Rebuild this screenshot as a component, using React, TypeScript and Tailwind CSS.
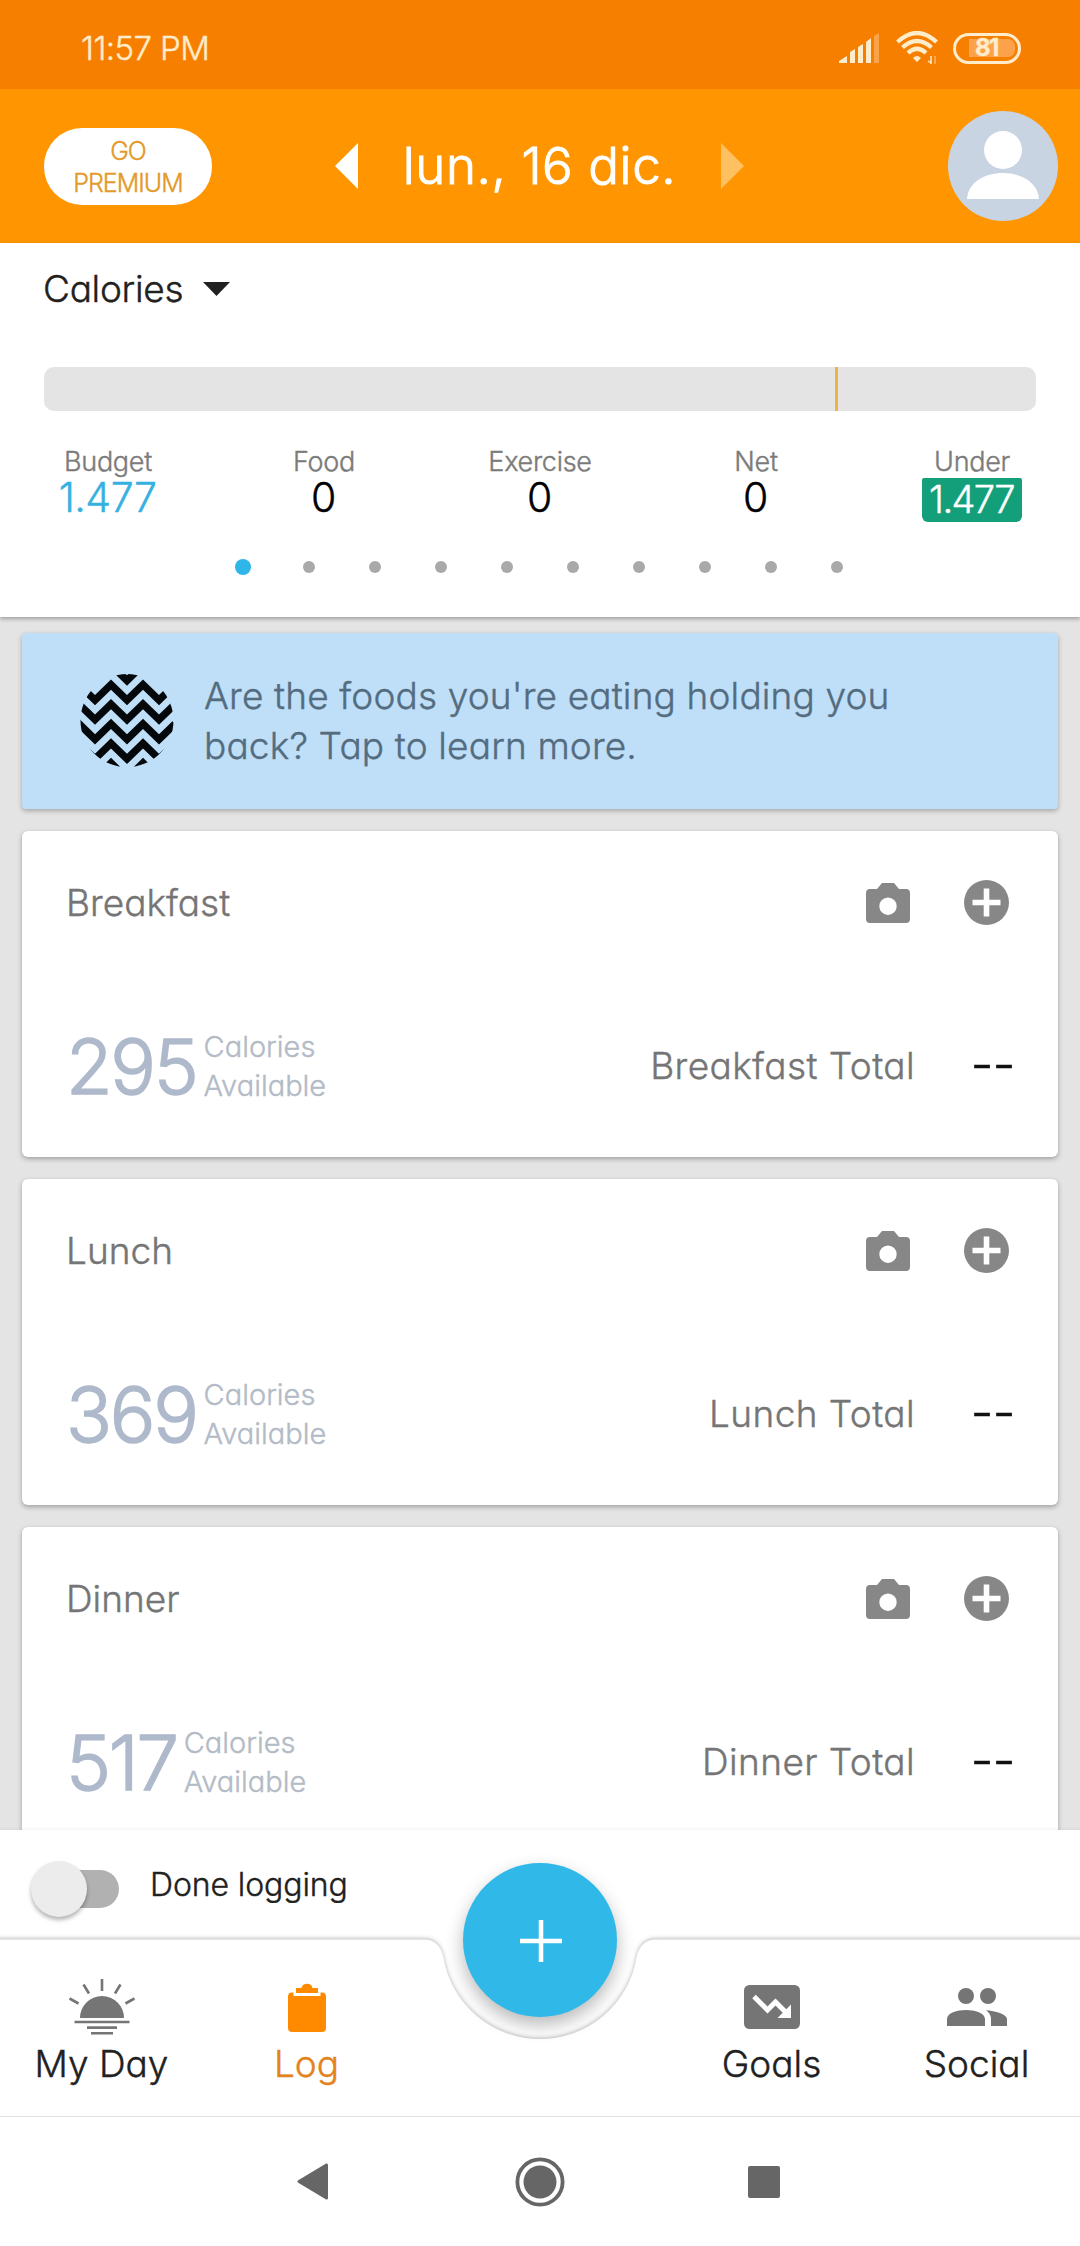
import { useState } from 'react';

const stats = [
  { label: 'Budget', value: '1.477', tone: 'text-[#35b1e1]' },
  { label: 'Food', value: '0', tone: 'text-black' },
  { label: 'Exercise', value: '0', tone: 'text-black' },
  { label: 'Net', value: '0', tone: 'text-black' },
];

const meals = [
  { name: 'Breakfast', calories: 295 },
  { name: 'Lunch', calories: 369 },
  { name: 'Dinner', calories: 517 },
];

const zigzags = [-8, 11.6, 31.2, 50.8, 70.4, 90];

function StatusBar() {
  return (
    <div className="flex h-[89px] items-center bg-[#f77f00] pl-[81px] pt-[7px] text-[#ffeccb]">
      <span className="w-[758px] text-[33px] leading-[40px] tracking-[-0.6px]">11:57 PM</span>
      <svg width="41" height="30" viewBox="0 0 41 30" fill="currentColor">
        <path d="M0 30v-2l8-5v7zM11 30V19l5-3v14zM19 30V14l5-3v19zM27 30V9l5-4v25z" />
        <path d="M35 30V3l5-3v30z" opacity="0.35" />
      </svg>
      <svg className="ml-[16px]" width="43" height="34" viewBox="0 0 43 34" fill="none" stroke="currentColor" strokeWidth="4.200">
        <path d="M1.500 11Q21 -7 40.500 11M6.500 16.500Q21 3.500 35.500 16.500M12 22Q21 13.500 30 22" />
        <path d="M17 27q4-4 8 0l-4 4z" fill="currentColor" stroke="none" />
        <path d="M35 25v8M32 30l3 2" strokeWidth="1.500" />
        <path d="M39 25v8" strokeWidth="1.500" opacity="0.5" />
      </svg>
      <div className="ml-[14px] flex h-[31px] w-[68px] items-center justify-end rounded-full border-[3px] border-[#ffeccb] pr-[3px]">
        <div className="flex h-[18px] w-[46px] items-center rounded-r-[7px] bg-[#fba24a] pl-[6px] text-[24px] leading-none font-bold tracking-[-1.5px]">
          81
        </div>
      </div>
    </div>
  );
}

function Header() {
  return (
    <header className="flex h-[154px] items-center bg-[#ff9500] pl-[44px]">
      <button className="h-[77px] w-[168px] rounded-[38px] bg-white pt-[1px] text-[25px] leading-[32px] tracking-[-1px] text-[#e39a2a]">
        GO
        <br />
        PREMIUM
      </button>
      <svg className="ml-[123px]" width="23" height="46" viewBox="0 0 23 46" fill="white">
        <path d="M23 0v46L0 23z" />
      </svg>
      <h1 className="w-[363px] text-center text-[51px] leading-[60px] tracking-[0.6px] whitespace-nowrap text-white [-webkit-text-stroke:1px]">
        lun., 16 dic.
      </h1>
      <svg width="23" height="46" viewBox="0 0 23 46" fill="#ffc062">
        <path d="M0 0v46l23-23z" />
      </svg>
      <svg className="ml-[204px]" width="110" height="110" viewBox="0 0 110 110">
        <circle cx="55" cy="55" r="55" fill="#c8d4e2" />
        <circle cx="55" cy="39" r="19" fill="white" />
        <path d="M19 88C20 71 37 62 55 62s35 9 36 26z" fill="white" />
      </svg>
    </header>
  );
}

function Summary() {
  return (
    <section className="relative z-10 h-[374px] bg-white shadow-[0_2px_4px_rgba(0,0,0,0.3)]">
      <div className="flex h-[91px] items-center pl-[43px] text-[#212121]">
        <span className="w-[160px] text-[37px] leading-[44px] tracking-[-0.3px]">Calories</span>
        <svg width="27" height="14" viewBox="0 0 27 14" fill="currentColor">
          <path d="M0 0h27L13.500 14z" />
        </svg>
      </div>
      <div className="mx-[44px] mt-[33px] h-[44px] rounded-[10px] bg-[#e4e4e4] pl-[791px]">
        <div className="h-full w-[3px] bg-[#ecb444]" />
      </div>
      <div className="mt-[33px] grid h-[79px] grid-cols-5 text-center">
        {stats.map((s) => (
          <div key={s.label}>
            <div className="text-[27px] leading-[36px] tracking-[-0.3px] text-[#7b7b7b]">{s.label}</div>
            <div className={`mt-[-1px] pr-[1px] text-[41px] leading-[36px] tracking-[-0.5px] ${s.tone}`}>{s.value}</div>
          </div>
        ))}
        <div>
          <div className="text-[27px] leading-[36px] tracking-[-0.3px] text-[#7b7b7b]">Under</div>
          <div className="mx-auto mt-[-2px] h-[44px] w-[100px] rounded-t-[2px] rounded-b-[6px] bg-[#139f79] pr-[1px] text-[38px] leading-[42px] tracking-[-1.6px] text-white">
            1.477
          </div>
        </div>
      </div>
      <div className="flex h-[88px] items-center justify-center gap-[54px]">
        <span className="-mx-[2px] size-[16px] rounded-full bg-[#2fb6e8]" />
        {[1, 2, 3, 4, 5, 6, 7, 8, 9].map((n) => (
          <span key={n} className="size-[12px] rounded-full bg-[#a9a9a9]" />
        ))}
      </div>
    </section>
  );
}

function TipBanner() {
  return (
    <div className="flex h-[176px] shrink-0 rounded-[4px] bg-[#bfdff8] pl-[58px] shadow-[0_2px_5px_rgba(0,0,0,0.28)]">
      <svg className="mt-[40px]" width="94" height="94" viewBox="0 0 94 94">
        <clipPath id="tip-badge">
          <circle cx="47" cy="47.500" r="46.500" />
        </clipPath>
        <g clipPath="url(#tip-badge)" fill="none" stroke="#05080b" strokeWidth="7.400">
          {zigzags.map((y) => (
            <path key={y} d={`M-17 ${y + 15.5}l16-15.500l16 15.500l16-15.500l16 15.500l16-15.500l16 15.500l16-15.500`} />
          ))}
        </g>
      </svg>
      <p className="mt-[38px] ml-[30px] text-[37px] leading-[50px] tracking-[0.15px] text-[#546c80]">
        Are the foods you're eating holding you
        <br />
        back? Tap to learn more.
      </p>
    </div>
  );
}

function MealCard({ name, calories }: { name: string; calories: number }) {
  return (
    <article className="h-[326px] shrink-0 rounded-[6px] bg-white shadow-[0_2px_5px_rgba(0,0,0,0.3)]">
      <div className="flex h-[143px] items-center pr-[49px] pl-[44px]">
        <h2 className="flex-1 text-[37px] leading-[44px] text-[#757575]">{name}</h2>
        <svg width="44" height="40" viewBox="0 0 44 40" fill="#878787">
          <path
            fillRule="evenodd"
            d="M16 0h12l5 6h7a4 4 0 0 1 4 4v26a4 4 0 0 1-4 4H4a4 4 0 0 1-4-4V10a4 4 0 0 1 4-4h7zM22 14.500a8.700 8.700 0 1 0 0 17.400a8.700 8.700 0 1 0 0-17.400z"
          />
        </svg>
        <svg className="ml-[54px]" width="45" height="45" viewBox="0 0 45 45">
          <circle cx="22.500" cy="22.500" r="22.500" fill="#878787" />
          <path d="M8.500 22.500h28M22.500 8.500v28" stroke="white" strokeWidth="5.600" />
        </svg>
      </div>
      <div className="flex h-[183px] items-center pr-[46px] pl-[44px]">
        <span className="text-[76px] leading-[80px] tracking-[-2.3px] text-[#aeb9cb] [-webkit-text-stroke:1.5px]">{calories}</span>
        <span className="ml-[7px] flex-1 text-[29px] leading-[39px] text-[#b3bbc6]">
          Calories
          <br />
          Available
        </span>
        <span className="text-[37px] leading-[44px] tracking-[0.4px] text-[#757575]">{name} Total</span>
        <span className="mt-[-2px] ml-[56px] w-[41px] origin-left scale-x-[1.3] text-[37px] leading-[44px] font-normal text-[#111]">--</span>
      </div>
    </article>
  );
}

function DoneLogging() {
  const [done, setDone] = useState(false);
  return (
    <div className="relative z-10 flex h-[109px] items-center bg-white pl-[31px] shadow-[0_-1px_3px_rgba(0,0,0,0.05)]">
      <button onClick={() => setDone(!done)} className="mt-[9px] flex h-[56px] w-[88px] items-center" aria-label="Done logging">
        <span className={`z-10 size-[56px] shrink-0 rounded-full bg-[#ececec] shadow-[0_3px_4px_rgba(0,0,0,0.3)] ${done ? 'order-2' : ''}`} />
        <span className={`h-[38px] w-[60px] rounded-full bg-[#b1b1b1] ${done ? '-mr-[28px]' : '-ml-[28px]'}`} />
      </button>
      <span className="ml-[31px] text-[32px] leading-[40px] tracking-[-0.1px] text-[#212121]">Done logging</span>
    </div>
  );
}

function MyDayIcon() {
  return (
    <svg width="66" height="56" viewBox="0 0 66 56" fill="none" stroke="#757575" strokeWidth="2.600">
      <path d="M11 39a22 22 0 0 1 44 0z" fill="#757575" stroke="none" />
      <path d="M5.500 43h55M18 48.600h30M22 54.200h22M33 0v12M14.500 5.500l5.500 9M51.500 5.500l-5.500 9M.500 19.500l9 5M65.500 19.500l-9 5" />
    </svg>
  );
}

function LogIcon() {
  return (
    <svg width="38" height="50" viewBox="0 0 38 50" fill="#ff8a00">
      <path d="M8 11V6h5.500a5.700 5.700 0 0 1 11 0H30v5z" />
      <path d="M4 10.500h1.500V14h27v-3.500H34a4 4 0 0 1 4 4V46a4 4 0 0 1-4 4H4a4 4 0 0 1-4-4V14.500a4 4 0 0 1 4-4z" />
    </svg>
  );
}

function GoalsIcon() {
  return (
    <svg width="56" height="44" viewBox="0 0 56 44">
      <rect width="56" height="44" rx="5.500" fill="#757575" />
      <path d="M10 11.500l13.500 13.500l8-8L42 27.500" fill="none" stroke="white" strokeWidth="5" />
      <path d="M47 19.500V33H33.500z" fill="white" />
    </svg>
  );
}

function SocialIcon() {
  return (
    <svg width="60" height="38" viewBox="0 0 60 38" fill="#757575">
      <circle cx="19" cy="8" r="8" />
      <circle cx="41" cy="8" r="8" />
      <path d="M0 38v-7c0-6 10-9 19-9s19 3 19 9v7zM39 22.300c9 .7 21 3.700 21 9V38H44v-7c0-4-2-6.500-5-8.700z" />
    </svg>
  );
}

const tabs = [
  { label: 'My Day', icon: <MyDayIcon /> },
  { label: 'Log', icon: <LogIcon /> },
  { label: 'Goals', icon: <GoalsIcon /> },
  { label: 'Social', icon: <SocialIcon /> },
];

function TabBar() {
  const [active, setActive] = useState('Log');
  return (
    <nav className="relative z-20 h-[178px] border-b border-[#e0e0e0]">
      {/* white sheet with a notch cut out for the add button */}
      <svg className="absolute -top-[20px] left-0" width="1080" height="197" viewBox="0 0 1080 197">
        <path
          className="drop-shadow-[0_-1px_2px_rgba(0,0,0,0.28)]"
          fill="white"
          d="M-10 20.500H424C435 20.500 441 27 443.300 38A98 98 0 0 0 636.700 38C639 27 645 20.500 656 20.500H1090V220H-10z"
        />
      </svg>
      <div className="relative grid h-full grid-cols-[205px_205px_260px_205px_205px]">
        {tabs.map((t, i) => (
          <button
            key={t.label}
            onClick={() => setActive(t.label)}
            className={`flex flex-col items-center pt-[38px] pr-[2px] ${i === 2 ? 'col-start-4' : ''}`}
          >
            <span className="flex h-[60px] items-center">{t.icon}</span>
            <span className={`mt-[7px] text-[37px] leading-[40px] ${active === t.label ? 'text-[#e2831c]' : 'text-[#212121]'}`}>
              {t.label}
            </span>
          </button>
        ))}
      </div>
      <button
        aria-label="Add"
        className="absolute -top-[76px] left-[463px] flex size-[154px] items-center justify-center rounded-full bg-[#30b8e8] shadow-[0_8px_18px_rgba(0,0,0,0.28)]"
      >
        <svg className="mt-[1px] ml-[2px]" width="42" height="42" viewBox="0 0 42 42" stroke="white" strokeWidth="4.500">
          <path d="M0 21h42M21 0v42" />
        </svg>
      </button>
    </nav>
  );
}

function SystemNav() {
  return (
    <div className="flex h-[129px] items-center bg-white pl-[297px]">
      <svg width="31" height="37" viewBox="0 0 31 37" fill="#666" stroke="#666" strokeWidth="3" strokeLinejoin="round">
        <path d="M29.500 2v33L2 18.500z" />
      </svg>
      <svg className="ml-[187px]" width="50" height="50" viewBox="0 0 50 50">
        <circle cx="25" cy="25" r="22.600" fill="none" stroke="#666" strokeWidth="3.800" />
        <circle cx="25" cy="25" r="16.500" fill="#666" />
      </svg>
      <div className="ml-[183px] size-[32px] rounded-[2px] bg-[#666]" />
    </div>
  );
}

export default function App() {
  return (
    <div className="flex h-[2246px] w-[1080px] flex-col overflow-hidden bg-white font-['Inter','Lato',sans-serif] font-light [font-feature-settings:'cv11'] [-webkit-text-stroke:0.4px]">
      <StatusBar />
      <Header />
      <Summary />
      <main className="flex h-[1213px] flex-col gap-[22px] overflow-hidden bg-[#e4e4e4] px-[22px] pt-[16px]">
        <TipBanner />
        {meals.map((m) => (
          <MealCard key={m.name} name={m.name} calories={m.calories} />
        ))}
      </main>
      <DoneLogging />
      <TabBar />
      <SystemNav />
    </div>
  );
}
